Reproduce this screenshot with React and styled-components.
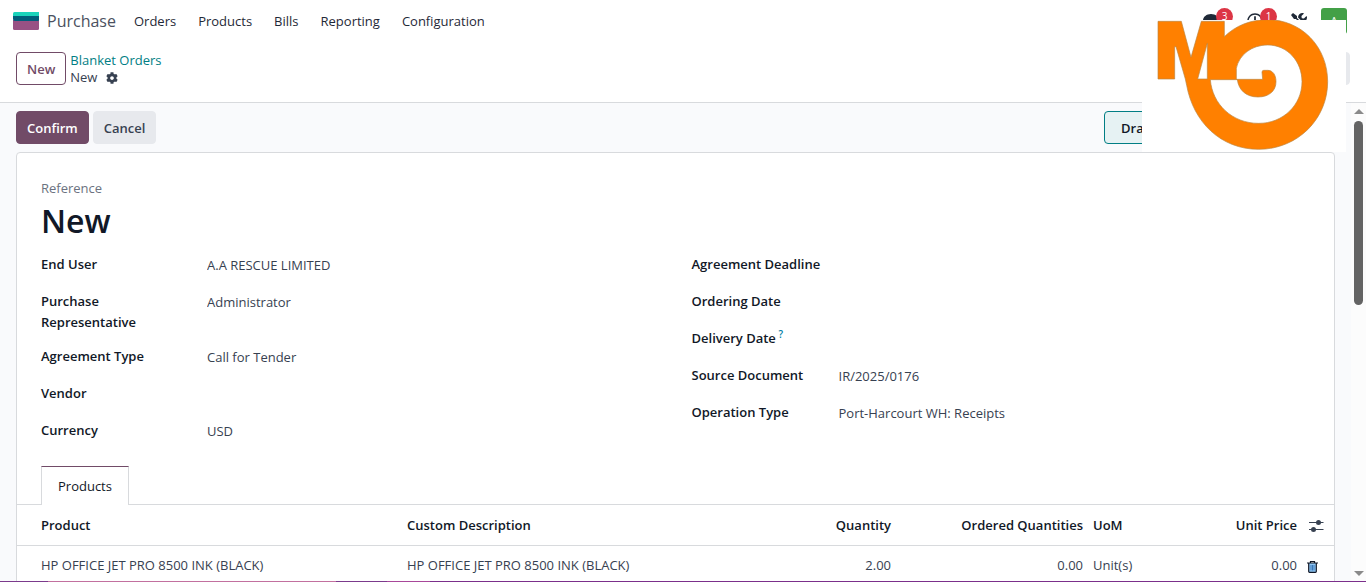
import React from "react";
import styled, { createGlobalStyle } from "styled-components";
import { FaCog, FaComment, FaRegClock, FaTools } from "react-icons/fa";

const GlobalStyle = createGlobalStyle`
  *, *::before, *::after { box-sizing: border-box; }
  body {
    margin: 0;
    background: #fff;
    color: #374151;
    font-family: "Open Sans", "Noto Sans", sans-serif;
    font-size: 13px;
    line-height: 21px;
  }
  button, input { font: inherit; color: inherit; }
`;

const Page = styled.div`
  position: relative;
  display: flex;
  flex-direction: column;
  height: 100vh;
  overflow: hidden;
`;

const Navbar = styled.nav`
  display: flex;
  align-items: center;
  height: 42px;
  padding: 0 19px 0 13px;
`;

const AppName = styled.a`
  margin: 0 18px 0 8px;
  color: #4b5160;
  font-size: 16px;
  text-decoration: none;
`;

const Menu = styled.div`
  display: flex;
  gap: 22px;
`;

const MenuLink = styled.a`
  color: #1f2937;
  text-decoration: none;
`;

const Systray = styled.div`
  display: flex;
  align-items: flex-start;
  height: 42px;
  margin-left: auto;
  padding-top: 8px;
`;

const TrayButton = styled.button`
  position: relative;
  display: flex;
  justify-content: center;
  align-items: flex-start;
  width: 44px;
  height: 28px;
  padding: 5px 0 0;
  border: 0;
  background: none;
  color: #1f2937;
  font-size: 16px;
`;

const Badge = styled.span`
  position: absolute;
  top: 0;
  left: 27px;
  width: 17px;
  height: 17px;
  border-radius: 50%;
  background: #dc3545;
  color: #fff;
  font-size: 10px;
  line-height: 17px;
  text-align: center;
`;

const Avatar = styled.button`
  width: 26px;
  height: 26px;
  padding: 0;
  border: 0;
  border-radius: 3px;
  background: #43a047;
  color: #fff;
  font-size: 12px;
`;

const ControlPanel = styled.header`
  display: flex;
  align-items: flex-start;
  gap: 4px;
  height: 61px;
  padding: 10px 16px 0;
  border-bottom: 1px solid #d8dadd;
`;

const buttonColors = {
  primary: ["#714b67", "#714b67", "#fff"],
  outline: ["#fff", "#714b67", "#714b67"],
  secondary: ["#e7e9ed", "#e7e9ed", "#374151"],
};

const Button = styled.button`
  height: 33px;
  padding: 2px 10px 0;
  border: 1px solid ${(p) => buttonColors[p.$kind][1]};
  border-radius: 4px;
  background: ${(p) => buttonColors[p.$kind][0]};
  color: ${(p) => buttonColors[p.$kind][2]};
  font-weight: 600;
`;

const PagerButton = styled(Button)`
  width: 32px;
  margin-left: auto;
`;

const Breadcrumb = styled.div`
  display: flex;
  flex-direction: column;
  line-height: 17px;
`;

const BreadcrumbLink = styled.a`
  color: #017e84;
  font-weight: 500;
  text-decoration: none;
`;

const Current = styled.div`
  display: flex;
  align-items: center;
  gap: 9px;
`;

const IconButton = styled.button`
  display: inline-flex;
  padding: 0;
  border: 0;
  background: none;
  font-size: 12px;
  vertical-align: middle;
`;

const Body = styled.div`
  display: flex;
  flex: 1;
  min-height: 0;
`;

const Content = styled.main`
  flex: 1;
  min-width: 0;
  padding: 8px 16px 0;
  background: #f9fafc;
  overflow: hidden;
`;

const StatusRow = styled.div`
  display: flex;
  gap: 4px;
  margin-bottom: 8px;
`;

const Stage = styled.button`
  width: 231px;
  height: 33px;
  margin-left: auto;
  padding: 2px 16px 0;
  border: 1px solid #017e84;
  border-radius: 4px;
  background: #e6f2f3;
  color: #111827;
  font-weight: 600;
  text-align: left;
`;

const Sheet = styled.section`
  min-height: 100vh;
  padding-top: 25px;
  border: 1px solid #d8dadd;
  border-radius: 4px;
  background: #fff;
`;

const Heading = styled.div`
  padding: 0 24px;
  color: #6b7280;
`;

const Title = styled.h1`
  margin: 0 0 10px;
  color: #111827;
  font-size: 32px;
  font-weight: 600;
  line-height: 44px;
`;

const Groups = styled.div`
  display: grid;
  grid-template-columns: 1fr 1fr;
  gap: 32px;
  padding: 0 24px;
`;

const Group = styled.div`
  display: flex;
  flex-direction: column;
  gap: 12px;
`;

const FieldRow = styled.div`
  display: grid;
  grid-template-columns: ${(p) => p.$label}px 1fr;
  gap: 16px;
  align-items: start;
`;

const Label = styled.label`
  padding-top: 1px;
  color: #111827;
  font-weight: 600;
  white-space: ${(p) => (p.$wrap ? "normal" : "nowrap")};
`;

const Help = styled.sup`
  color: #0180a5;
  font-size: 10px;
  line-height: 0;
`;

const Value = styled.input`
  width: 100%;
  height: 25px;
  padding: 0 0 2px;
  border: 0;
  outline: 0;
  background: transparent;
`;

const Tabs = styled.div`
  display: flex;
  margin-top: 22px;
  padding: 0 24px;
  border-bottom: 1px solid #d8dadd;
`;

const Tab = styled.button`
  height: 39px;
  margin-bottom: -1px;
  padding: 0 16px;
  border: 1px solid #d8dadd;
  border-top-color: #714b67;
  border-bottom: 0;
  background: #fff;
  color: #111827;
`;

const Lines = styled.table`
  width: 100%;
  border-spacing: 0;
  table-layout: fixed;
`;

const Cell = styled.td`
  height: ${(p) => (p.as === "th" ? 41 : 39)}px;
  padding: 0 5px;
  border-bottom: 1px solid #d8dadd;
  color: ${(p) => (p.as === "th" ? "#111827" : "#374151")};
  font-weight: ${(p) => (p.as === "th" ? 600 : 400)};
  text-align: ${(p) => (p.$right ? "right" : "left")};
  vertical-align: middle;
  white-space: nowrap;
  &:first-child { padding-left: 24px; }
`;

const Scrollbar = styled.div`
  display: flex;
  flex-direction: column;
  align-items: center;
  width: 15px;
  padding: 6px 0 5px;
  background: #fcfcfc;
`;

const Arrow = styled.span`
  border: 5px solid transparent;
  border-top: ${(p) => (p.$down ? "5px solid #8a8a8a" : "0")};
  border-bottom: ${(p) => (p.$down ? "0" : "5px solid #8a8a8a")};
`;

const Thumb = styled.div`
  width: 9px;
  height: 184px;
  margin: 7px 0 auto;
  border-radius: 5px;
  background: #646464;
`;

const BottomStrip = styled.div`
  display: flex;
  flex: none;
  height: 1px;
  background: #7b2f8b;
`;

const Segment = styled.span`
  width: ${(p) => p.$width}px;
  background: ${(p) => p.$color};
`;

const LogoCard = styled.div`
  position: absolute;
  top: 20px;
  right: 20px;
  width: 204px;
  height: 132px;
  background: #fff;
`;

const leftFields = [
  ["End User", "A.A RESCUE LIMITED"],
  ["Purchase Representative", "Administrator"],
  ["Agreement Type", "Call for Tender"],
  ["Vendor", ""],
  ["Currency", "USD"],
];

const rightFields = [
  ["Agreement Deadline", ""],
  ["Ordering Date", ""],
  ["Delivery Date", "", true],
  ["Source Document", "IR/2025/0176"],
  ["Operation Type", "Port-Harcourt WH: Receipts"],
];

const columns = [
  { title: "Product", width: 385 },
  { title: "Custom Description" },
  { title: "Quantity", width: 100, right: true },
  { title: "Ordered Quantities", width: 192, right: true },
  { title: "UoM", width: 80 },
  { title: "Unit Price", width: 134, right: true },
];

const lines = [
  ["HP OFFICE JET PRO 8500 INK (BLACK)", "HP OFFICE JET PRO 8500 INK (BLACK)", "2.00", "0.00", "Unit(s)", "0.00"],
];

function FieldGroup({ fields, label, wrap }) {
  return (
    <Group>
      {fields.map(([name, value, help]) => {
        const id = name.toLowerCase().replace(/ /g, "-");
        return (
          <FieldRow key={name} $label={label}>
            <Label htmlFor={id} $wrap={wrap}>
              {name}
              {help && <Help> ?</Help>}
            </Label>
            <Value id={id} defaultValue={value} />
          </FieldRow>
        );
      })}
    </Group>
  );
}

function PurchaseIcon() {
  return (
    <svg width="26" height="18" viewBox="0 0 26 18" aria-hidden="true">
      <path d="M0 8h26v8.500q0 1.500-1.500 1.500h-23Q0 18 0 16.500z" fill="#985184" />
      <path d="M0 4h26v4q0 1-1 1H2Q0 9 0 7z" fill="#005e7a" />
      <path d="M1.500 0H26v4H0V1.500Q0 0 1.500 0z" fill="#1ad3bb" />
    </svg>
  );
}

function SlidersIcon() {
  return (
    <svg width="17" height="13" viewBox="0 0 17 13" aria-hidden="true">
      <path d="M2 2.500h14.500M2 9.500h14.500" stroke="#374151" strokeWidth="1" />
      <circle cx="11.500" cy="2.500" r="2.500" fill="#374151" />
      <circle cx="6.500" cy="9.500" r="2.500" fill="#374151" />
    </svg>
  );
}

function TrashIcon() {
  return (
    <svg width="11" height="13" viewBox="0 0 11 13" aria-hidden="true">
      <path d="M2 3h7v9H2z" fill="#8fc7f5" />
      <path d="M3.500 1.500h4v1.500h-4zM0 3h11M1.700 3v8.500q0 .8.800.8h6q.8 0 .8-.8V3" fill="none" stroke="#111827" strokeWidth="1.200" />
      <path d="M4 5v5.500M5.500 5v5.500M7 5v5.500" stroke="#2563a8" strokeWidth=".8" />
    </svg>
  );
}

function SpiralLogo() {
  return (
    <svg width="204" height="132" viewBox="138 60 612 396" role="img" aria-label="Company logo">
      <g stroke="#b98543" strokeWidth="2">
        <path
          d="M186 64H256L285 172L316 64H385V110C420 76 464 59 515 59C616 59 695 140 695 245C695 358 604 448 488 448C374 448 292 366 272 256L268 237L240 140H236V237H186Z"
          fill="#ff8000"
        />
        <path d="M334 130V237H305Z" fill="#fff" />
        <path
          d="M421 238V205C430 163 468 135 515 135C574 135 618 184 618 245C618 315 561 370 488 370C408 370 349 312 343 239H424C428 270 450 291 486 291C520 291 540 272 540 245C540 224 530 211 515 211H503Q498 211 498 217L500 238Z"
          fill="#fff"
        />
      </g>
    </svg>
  );
}

export default function App() {
  return (
    <Page>
      <GlobalStyle />
      <Navbar>
        <PurchaseIcon />
        <AppName href="#">Purchase</AppName>
        <Menu>
          {["Orders", "Products", "Bills", "Reporting", "Configuration"].map((item) => (
            <MenuLink key={item} href="#">{item}</MenuLink>
          ))}
        </Menu>
        <Systray>
          <TrayButton aria-label="Messages"><FaComment /><Badge>3</Badge></TrayButton>
          <TrayButton aria-label="Activities"><FaRegClock /><Badge>1</Badge></TrayButton>
          <TrayButton aria-label="Tools"><FaTools /></TrayButton>
          <Avatar>A</Avatar>
        </Systray>
      </Navbar>
      <ControlPanel>
        <Button $kind="outline">New</Button>
        <Breadcrumb>
          <BreadcrumbLink href="#">Blanket Orders</BreadcrumbLink>
          <Current>
            New
            <IconButton aria-label="Actions"><FaCog /></IconButton>
          </Current>
        </Breadcrumb>
        <PagerButton $kind="secondary" aria-label="Next" />
      </ControlPanel>
      <Body>
        <Content>
          <StatusRow>
            <Button $kind="primary">Confirm</Button>
            <Button $kind="secondary">Cancel</Button>
            <Stage>Draft</Stage>
          </StatusRow>
          <Sheet>
            <Heading>
              Reference
              <Title>New</Title>
            </Heading>
            <Groups>
              <FieldGroup fields={leftFields} label={150} wrap />
              <FieldGroup fields={rightFields} label={131} />
            </Groups>
            <Tabs role="tablist">
              <Tab role="tab" aria-selected="true">Products</Tab>
            </Tabs>
            <Lines>
              <colgroup>
                {columns.map((c) => <col key={c.title} width={c.width} />)}
                <col width={32} />
              </colgroup>
              <thead>
                <tr>
                  {columns.map((c) => (
                    <Cell as="th" key={c.title} $right={c.right}>{c.title}</Cell>
                  ))}
                  <Cell as="th"><IconButton aria-label="Optional columns"><SlidersIcon /></IconButton></Cell>
                </tr>
              </thead>
              <tbody>
                {lines.map((line) => (
                  <tr key={line[0]}>
                    {line.map((text, i) => (
                      <Cell key={columns[i].title} $right={columns[i].right}>{text}</Cell>
                    ))}
                    <Cell><IconButton aria-label="Delete line"><TrashIcon /></IconButton></Cell>
                  </tr>
                ))}
              </tbody>
            </Lines>
          </Sheet>
        </Content>
        <Scrollbar aria-hidden="true">
          <Arrow />
          <Thumb />
          <Arrow $down />
        </Scrollbar>
      </Body>
      <BottomStrip>
        <Segment $width={48} $color="#7b3a8c" />
        <Segment $width={288} $color="#c2709f" />
        <Segment $width={51} $color="#7b3a8c" />
        <Segment $width={43} $color="#a8479a" />
      </BottomStrip>
      <LogoCard><SpiralLogo /></LogoCard>
    </Page>
  );
}
